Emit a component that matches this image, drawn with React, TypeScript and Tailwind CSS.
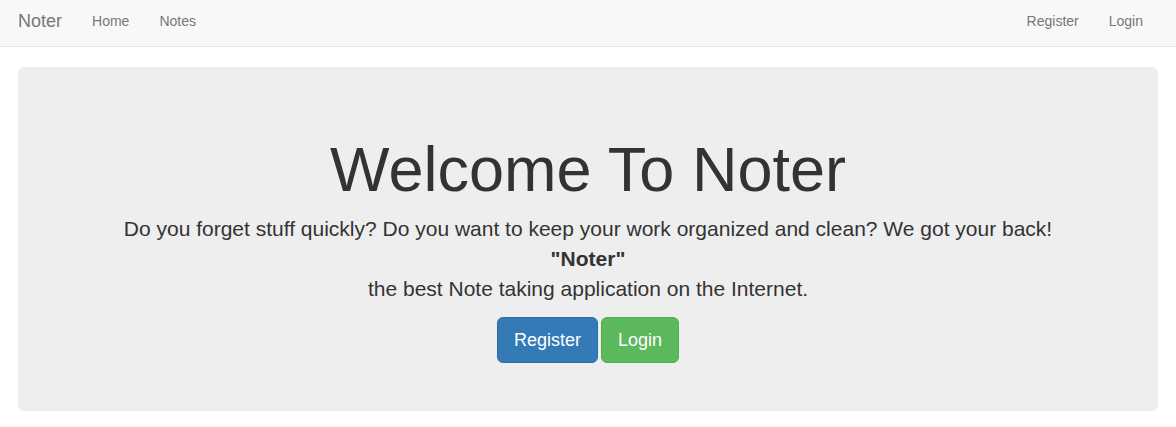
export default function App() {
    return (
        <div className="min-h-screen bg-white text-[#333] font-['Liberation_Sans',Arial,sans-serif]">
            {/* Navbar */}
            <nav className="h-[47px] bg-[#f8f8f8] border-b border-[#e7e7e7] flex items-start justify-between pt-[11px] pl-[3px] pr-[18px]">
                <div className="flex items-center">
                    <a className="px-[15px] text-[18px] leading-[20px] text-[#777]" href="#">Noter</a>
                    <a className="px-[15px] text-[14px] leading-[20px] text-[#777]" href="#">Home</a>
                    <a className="px-[15px] text-[14px] leading-[20px] text-[#777]" href="#">Notes</a>
                </div>
                <div className="flex items-center">
                    <a className="px-[15px] text-[14px] leading-[20px] text-[#777]" href="#">Register</a>
                    <a className="px-[15px] text-[14px] leading-[20px] text-[#777]" href="#">Login</a>
                </div>
            </nav>

            {/* Jumbotron */}
            <div className="mx-[18px] mt-[20px] bg-[#eee] rounded-[6px] px-[60px] pt-[48px] pb-[48px] text-center">
                <h1 className="mt-[20px] mb-[10px] text-[63px] leading-[1.1] font-normal">Welcome To Noter</h1>
                <p className="text-[21px] leading-[30px] mb-[13px]">
                    Do you forget stuff quickly? Do you want to keep your work organized and clean? We got your back!
                    <br />
                    <b>"Noter"</b>
                    <br />
                    the best Note taking application on the Internet.
                </p>
                <div className="flex justify-center gap-[3px]">
                    <button className="bg-[#337ab7] border border-[#2e6da4] text-white text-[18px] leading-[24px] px-[16px] py-[10px] rounded-[6px]">
                        Register
                    </button>
                    <button className="bg-[#5cb85c] border border-[#4cae4c] text-white text-[18px] leading-[24px] px-[16px] py-[10px] rounded-[6px]">
                        Login
                    </button>
                </div>
            </div>
        </div>
    )
}
